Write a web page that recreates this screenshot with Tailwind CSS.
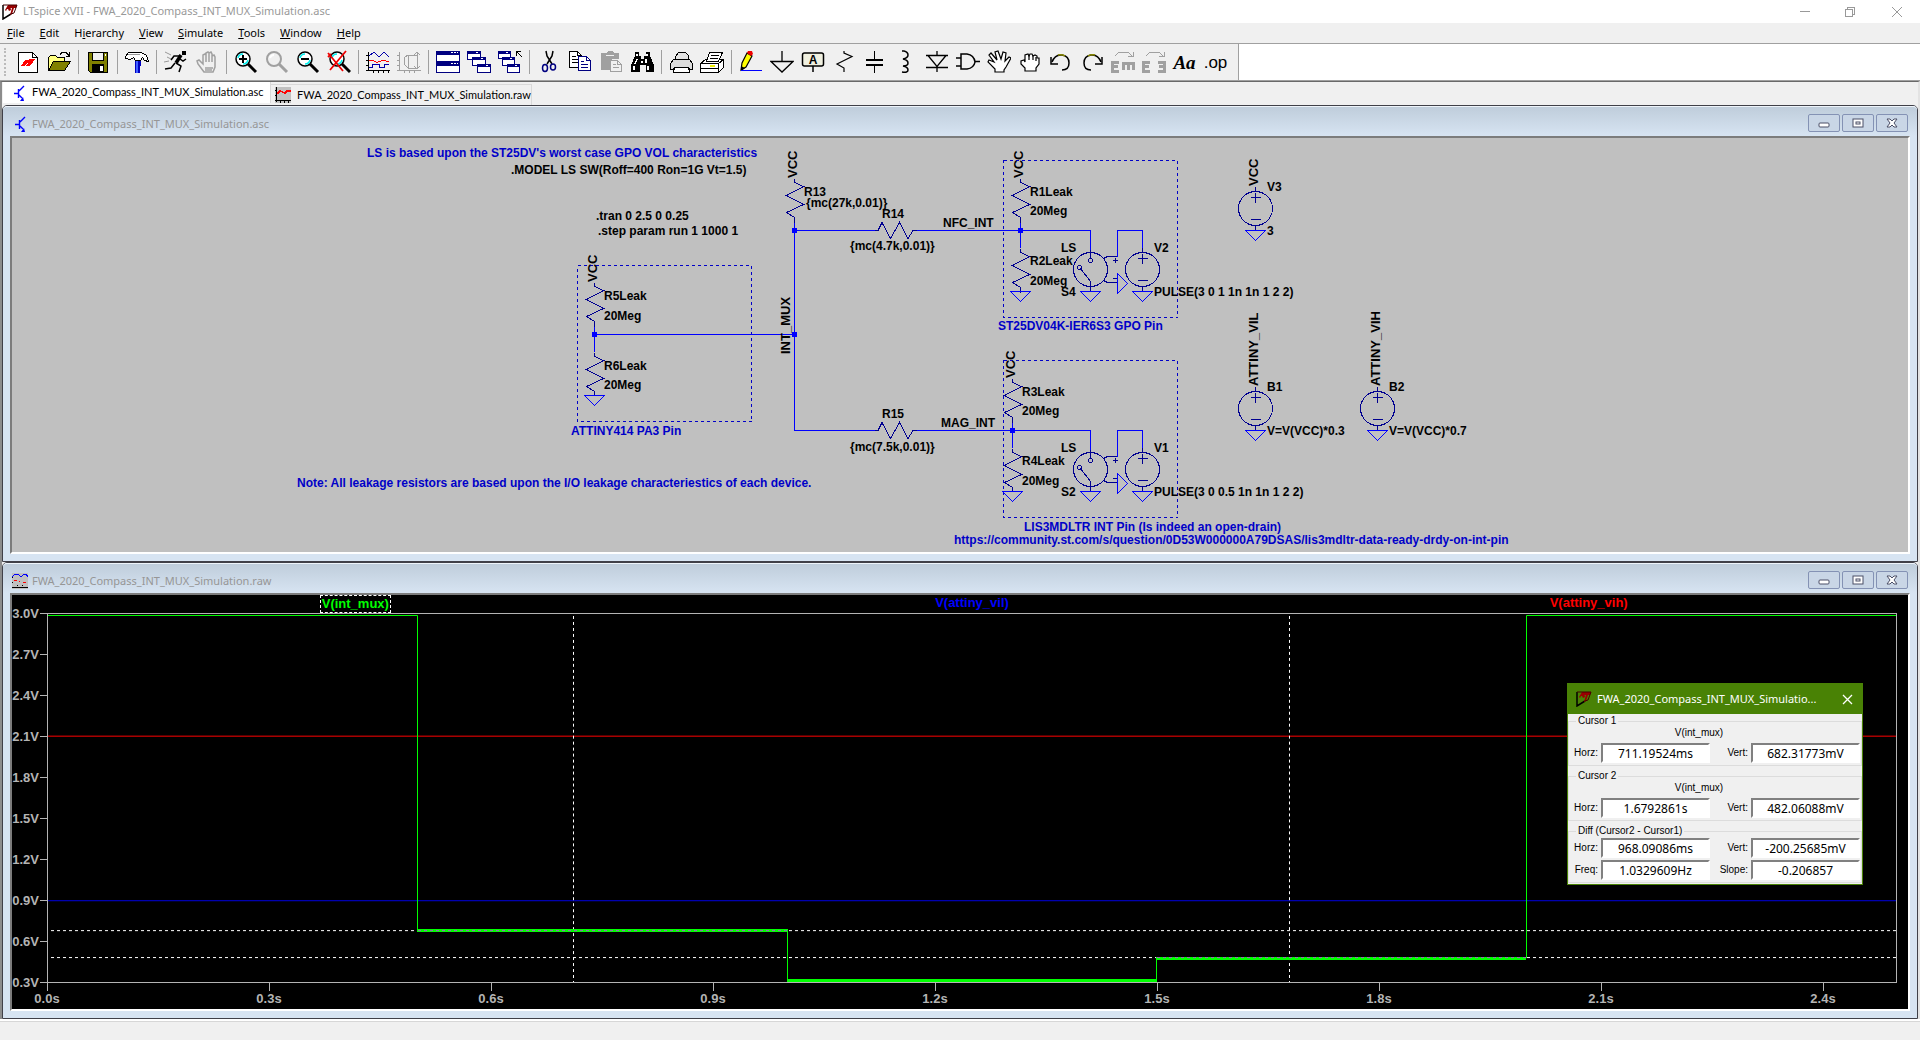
<!DOCTYPE html>
<html lang="en">
<head>
<meta charset="utf-8">
<title>LTspice XVII - FWA_2020_Compass_INT_MUX_Simulation.asc</title>
<script src="https://cdn.jsdelivr.net/npm/@tailwindcss/browser@4"></script>
</head>
<body class="h-screen overflow-hidden bg-[#f0f0f0] flex flex-col font-['Noto_Sans',sans-serif] text-[11px] text-black">

<!-- shared symbols -->
<svg class="hidden" aria-hidden="true">
  <defs>
    <symbol id="logo" viewBox="0 0 16 16">
      <path d="M1 1v14l8-5" fill="none" stroke="currentColor" stroke-width="1.500"/>
      <path d="M3 6l3-5h2l1 5-2 1-1-2H5L4 7zM8 1h7l-1 3h-2l-2 6-2 1 2-7H8z" fill="#900"/>
      <path d="M1 1h14l-3 8-3 1" fill="none" stroke="#400" stroke-width="1"/>
    </symbol>
    <symbol id="transistor" viewBox="0 0 16 16">
      <path d="M2 8.500h4M6.500 4v9M7 6l5-5M7 10l3 3" fill="none" stroke="#00f" stroke-width="1.400"/>
      <path d="M12 16H8l3-4z" fill="#00f"/>
    </symbol>
    <symbol id="gnd" overflow="visible"><path d="M-10 0h20L0 10z" fill="none" stroke="#00f"/></symbol>
    <symbol id="src" overflow="visible">
      <g fill="none" stroke="#000090"><circle r="17"/><path d="M0-22v5M0 17v5M-5-11h10M0-16v10M-5 11h10"/></g>
      <use href="#gnd" y="22"/>
    </symbol>
    <symbol id="sw" overflow="visible">
      <g fill="none" stroke="#000090"><circle r="17"/><circle cy="-9" r="2"/><circle cx="-11" cy="-2" r="2"/><path d="M0-20v9M-10-1L0 12v10M13-11l4-2h10M13 11l4 2h10M22-9h5M24.500-11.500v5M22 9h5"/></g>
      <path d="M0-39v19M27-13v-26h25v17" fill="none" stroke="#00f"/>
      <path d="M27 4l10 10-10 10z" fill="none" stroke="#00f"/>
      <use href="#gnd" y="22"/>
    </symbol>
    <symbol id="restore" viewBox="0 0 12 10"><rect x="1" y="1" width="10" height="8" fill="#fff" stroke="#4b4f66"/><rect x="4" y="4" width="4" height="2" fill="#fff" stroke="#4b4f66"/></symbol>
    <symbol id="mini" viewBox="0 0 12 10"><rect x="1" y="5" width="10" height="4" rx="1" fill="#fff" stroke="#4b4f66"/></symbol>
    <symbol id="cross" viewBox="0 0 12 10"><path d="M1 1h3l2 2 2-2h3L8 5l3 4H8L6 7 4 9H1l3-4z" fill="#fff" stroke="#4b4f66"/></symbol>
  </defs>
</svg>

<!-- application title bar -->
<header class="h-[23px] shrink-0 bg-white flex items-center pl-[2px] text-[#999]">
  <svg class="size-[16px] text-black" aria-hidden="true"><use href="#logo"/></svg>
  <h1 class="ml-[5px] flex-1">LTspice XVII - FWA_2020_Compass_INT_MUX_Simulation.asc</h1>
  <button class="w-[46px] h-full flex items-center justify-center" aria-label="Minimize"><svg class="size-[12px]" viewBox="0 0 12 12" shape-rendering="crispEdges"><path d="M1 5.500h10" stroke="#999"/></svg></button>
  <button class="w-[46px] h-full flex items-center justify-center" aria-label="Restore"><svg class="size-[12px]" viewBox="0 0 12 12" fill="none" shape-rendering="crispEdges"><path d="M.5 3.500h7v7h-7zM2.500 3V1.500h7v7H8" stroke="#999"/></svg></button>
  <button class="w-[46px] h-full flex items-center justify-center" aria-label="Close"><svg class="size-[12px]" viewBox="0 0 12 12"><path d="M1 1l10 10M11 1L1 11" stroke="#999"/></svg></button>
</header>

<nav class="h-[20px] shrink-0 flex items-center pl-[7px] gap-[15px]" aria-label="Menu">
  <button><u>F</u>ile</button><button><u>E</u>dit</button><button>H<u>i</u>erarchy</button><button><u>V</u>iew</button><button><u>S</u>imulate</button><button><u>T</u>ools</button><button><u>W</u>indow</button><button><u>H</u>elp</button>
</nav>

<!-- toolbar -->
<div class="h-[38px] shrink-0 bg-white border-y border-[#a0a0a0] flex">
  <div role="toolbar" class="flex items-center bg-[#f0f0f0] border-r border-[#a0a0a0] pl-[4px] pr-[7px]">
    <span class="w-[8px] h-[28px] border-l-2 border-dotted border-[#bbb]"></span>
    <button class="w-[31px] h-full flex items-center justify-center" aria-label="New schematic"><svg class="size-[24px]" viewBox="0 0 24 24" shape-rendering="crispEdges"><path d="M2.500 2.500h14l5 5v15h-19z" fill="#fff" stroke="#000"/><path d="M16.500 2.500v5h5" fill="none" stroke="#000"/><path d="M5 16l4-6h5l-1 3h-2l-2 3zM13 9h6l-3 5-3 2H9l2-2 2-1z" fill="#f00"/></svg></button>
    <button class="w-[31px] h-full flex items-center justify-center" aria-label="Open"><svg class="size-[24px]" viewBox="0 0 24 24" shape-rendering="crispEdges"><path d="M1.500 20V7.500l2-2h5l2 2h7v4" fill="#ffff80" stroke="#000"/><path d="M1.500 20.500l5-9h17l-6 9z" fill="#808000" stroke="#000"/><path d="M13 4.500l2-2h4l3 3M22.500 2v4h-4" fill="none" stroke="#000"/></svg></button>
    <span class="w-[8px] h-[24px] flex justify-center"><i class="w-px bg-[#a0a0a0]"></i></span>
    <button class="w-[31px] h-full flex items-center justify-center" aria-label="Save"><svg class="size-[24px]" viewBox="0 0 24 24" shape-rendering="crispEdges"><path d="M2.500 2.500h19v20h-17l-2-2z" fill="#808000" stroke="#000"/><path d="M6.500 2.500h11v8h-11z" fill="#f0f0f0" stroke="#000"/><path d="M6 14h12v8H6z" fill="#000"/><path d="M14 16h3v5h-3z" fill="#fff"/><path d="M19 4h1v2h-1z" fill="#fff"/></svg></button>
    <span class="w-[8px] h-[24px] flex justify-center"><i class="w-px bg-[#a0a0a0]"></i></span>
    <button class="w-[31px] h-full flex items-center justify-center" aria-label="Control panel"><svg class="size-[24px]" viewBox="0 0 24 24" shape-rendering="crispEdges"><path d="M.5 6.500l3-4h13l5 3 2 6-4-1-2-3-2 3h-5l-2-3-3 2-5-1z" fill="#fff" stroke="#000"/><path d="M3 4h12" stroke="#999"/><path d="M10 11h6v5h-1v7h-5v-7z" fill="#0000c0"/><path d="M11 11h2v12h-2z" fill="#4060ff"/></svg></button>
    <span class="w-[8px] h-[24px] flex justify-center"><i class="w-px bg-[#a0a0a0]"></i></span>
    <button class="w-[31px] h-full flex items-center justify-center" aria-label="Run"><svg class="size-[24px]" viewBox="0 0 24 24" fill="none" stroke="#000"><path d="M18 1h4v4h-4z" fill="#000" stroke="none"/><path d="M17 5l-5 8" stroke-width="3.500"/><path d="M16 6l-6 0-3 4M16 9l3 2 3-2M12 13l5 3-2 6M11 13l-4 5-6 1" stroke-width="1.500"/><path d="M1 2l6 3M3 7l4 2M0 12l5-1" stroke="#999"/></svg></button>
    <button class="w-[31px] h-full flex items-center justify-center" aria-label="Halt"><svg class="size-[24px]" viewBox="0 0 24 24" fill="none" stroke="#a0a0a0" stroke-width="1.500"><path d="M9 22l-6-8-1-3 2-1 4 4V5l2-1 1 1v7V3l2-1 1 1v9V3l2-1 1 2v8V6l2-1 1 2v10l-2 5z"/><path d="M10 18h8M10 20h7"/></svg></button>
    <span class="w-[8px] h-[24px] flex justify-center"><i class="w-px bg-[#a0a0a0]"></i></span>
    <button class="w-[31px] h-full flex items-center justify-center" aria-label="Zoom in"><svg class="size-[24px]" viewBox="0 0 24 24" fill="none"><circle cx="9" cy="9" r="7" fill="#fff" stroke="#000" stroke-width="1.500"/><path d="M4 8q1-4 5-4M14 10q-1 4-5 4" stroke="#0ee" stroke-width="1.500"/><path d="M9 5v8M5 9h8" stroke="#000" stroke-width="2"/><path d="M14 14l8 8" stroke="#000" stroke-width="3"/></svg></button>
    <button class="w-[31px] h-full flex items-center justify-center" aria-label="Pan"><svg class="size-[24px]" viewBox="0 0 24 24" fill="none" stroke="#a0a0a0"><circle cx="9" cy="9" r="7" stroke-width="2"/><path d="M5 8q1-3 4-3" stroke="#fff" stroke-width="2"/><path d="M14 14l8 8" stroke-width="3"/></svg></button>
    <button class="w-[31px] h-full flex items-center justify-center" aria-label="Zoom out"><svg class="size-[24px]" viewBox="0 0 24 24" fill="none"><circle cx="9" cy="9" r="7" fill="#fff" stroke="#000" stroke-width="1.500"/><path d="M4 8q1-4 5-4M14 10q-1 4-5 4" stroke="#0ee" stroke-width="1.500"/><path d="M5 9h8" stroke="#000" stroke-width="2"/><path d="M14 14l8 8" stroke="#000" stroke-width="3"/></svg></button>
    <button class="w-[31px] h-full flex items-center justify-center" aria-label="Zoom full extents"><svg class="size-[24px]" viewBox="0 0 24 24" fill="none"><circle cx="10" cy="9" r="7" fill="#fff" stroke="#000" stroke-width="1.500"/><path d="M5 8q1-4 5-4M15 10q-1 4-5 4" stroke="#0ee" stroke-width="1.500"/><path d="M15 14l8 8" stroke="#000" stroke-width="3"/><path d="M1 3l15 18M19 1L3 20M1 7l3-3" stroke="#e00" stroke-width="1.800"/></svg></button>
    <span class="w-[8px] h-[24px] flex justify-center"><i class="w-px bg-[#a0a0a0]"></i></span>
    <button class="w-[31px] h-full flex items-center justify-center" aria-label="Autorange"><svg class="size-[24px]" viewBox="0 0 24 24" fill="none" shape-rendering="crispEdges"><path d="M2.500 2v19M0 20.500h24M0 5.500h3M0 10.500h3M0 15.500h3M7.500 20v3M12.500 20v3M17.500 20v3M22.500 20v3" stroke="#000"/><path d="M3 6l5-4 5 5 5-5 5 5" stroke="#00a"/><path d="M3 10.500h4l4 2 5-2 7 1" stroke="#f00"/><path d="M3 17.500h3v-3h7v3h5v-3h5" stroke="#00a"/></svg></button>
    <button class="w-[31px] h-full flex items-center justify-center" aria-label="Plot settings"><svg class="size-[24px]" viewBox="0 0 24 24" fill="none" stroke="#a0a0a0" shape-rendering="crispEdges"><path d="M2.500 2v19M0 20.500h24M0 5.500h3M0 10.500h3M0 15.500h3M7.500 20v3M12.500 20v3M17.500 20v3M7 8l4-3h10M7 8v6l4 4h10M20.500 2v17M17 5l3-3 3 3M17 16l3 3 3-3M11 5v13"/></svg></button>
    <span class="w-[8px] h-[24px] flex justify-center"><i class="w-px bg-[#a0a0a0]"></i></span>
    <button class="w-[31px] h-full flex items-center justify-center" aria-label="Tile windows"><svg class="size-[24px]" viewBox="0 0 24 24" fill="#fff" stroke="#000080" shape-rendering="crispEdges"><path d="M.5 1.500h23v10H.5zM.5 12.500h23v10H.5z"/><path d="M1 3h22M1 14h22" stroke-width="3"/><path d="M15 2.500h2M18 2.500h2M21 2.500h1M15 13.500h2M18 13.500h2M21 13.500h1" stroke="#fff"/></svg></button>
    <button class="w-[31px] h-full flex items-center justify-center" aria-label="Cascade windows"><svg class="size-[24px]" viewBox="0 0 24 24" fill="#fff" stroke="#000080" shape-rendering="crispEdges"><path d="M.5 1.500h13v8H.5z"/><path d="M1 2.500h12" stroke-width="3"/><path d="M5.500 7.500h13v8h-13z"/><path d="M6 8.500h12" stroke-width="3"/><path d="M10.500 14.500h13v8h-13z"/><path d="M11 15.500h12" stroke-width="3"/><path d="M9 2.500h2M14 8.500h2M19 15.500h2" stroke="#fff"/></svg></button>
    <button class="w-[31px] h-full flex items-center justify-center" aria-label="Close all"><svg class="size-[24px]" viewBox="0 0 24 24" fill="#fff" stroke="#000080" shape-rendering="crispEdges"><path d="M.5 1.500h12v7H.5z"/><path d="M1 2.500h11" stroke-width="3"/><path d="M4.500 7.500h12v8h-12z"/><path d="M5 8.500h11" stroke-width="3"/><path d="M9.500 14.500h12v8h-12z"/><path d="M10 15.500h11" stroke-width="3"/><path d="M8 2.500h2M12 8.500h2M17 15.500h2" stroke="#fff"/><path d="M18.500 6V1.500H23M19 2l5 5" fill="none" stroke="#000"/></svg></button>
    <span class="w-[8px] h-[24px] flex justify-center"><i class="w-px bg-[#a0a0a0]"></i></span>
    <button class="w-[31px] h-full flex items-center justify-center" aria-label="Cut"><svg class="size-[24px]" viewBox="0 0 24 24" fill="none"><path d="M9 1l1 5 5 8M16 1l-1 5-5 8" stroke="#000" stroke-width="1.500"/><ellipse cx="8" cy="18" rx="2.500" ry="3.500" stroke="#000080" stroke-width="1.500"/><ellipse cx="16" cy="17" rx="2.500" ry="3" stroke="#000080" stroke-width="1.500"/></svg></button>
    <button class="w-[31px] h-full flex items-center justify-center" aria-label="Copy"><svg class="size-[24px]" viewBox="0 0 24 24" fill="#fff" shape-rendering="crispEdges"><path d="M1.500 1.500h8l4 4v12h-12z" stroke="#000"/><path d="M9.500 1.500v4h4M4 6.500h4M4 9.500h6M4 12.500h6" fill="none" stroke="#000"/><path d="M10.500 6.500h8l4 4v10h-12z" stroke="#000080"/><path d="M18.500 6.500v4h4M13 11.500h3M13 14.500h7M13 17.500h7" fill="none" stroke="#000080"/></svg></button>
    <button class="w-[31px] h-full flex items-center justify-center" aria-label="Paste"><svg class="size-[24px]" viewBox="0 0 24 24" fill="#a0a0a0" shape-rendering="crispEdges"><path d="M2 3h5l2-2h4l2 2h5v6h-7v11H2z"/><path d="M7 5h8" stroke="#f0f0f0"/><path d="M11.500 10.500h7l4 4v7h-11z" fill="#f0f0f0" stroke="#a0a0a0"/><path d="M18.500 10.500v4h4M14 14.500h3M14 17.500h6" fill="none" stroke="#a0a0a0"/></svg></button>
    <button class="w-[31px] h-full flex items-center justify-center" aria-label="Find"><svg class="size-[24px]" viewBox="0 0 24 24" shape-rendering="crispEdges"><path d="M5 2h4v4h2v3h3V6h2V2h4v4l4 9v7h-8v-7h-6v7H1v-7l4-9z"/><path d="M7 4v2M7 9l-2 5M17 4v2M16 9v4M4 16v4M18 16v4M12 11v2" stroke="#fff" stroke-width="1.500"/></svg></button>
    <span class="w-[8px] h-[24px] flex justify-center"><i class="w-px bg-[#a0a0a0]"></i></span>
    <button class="w-[31px] h-full flex items-center justify-center" aria-label="Print"><svg class="size-[24px]" viewBox="0 0 24 24" fill="#fff" stroke="#000" shape-rendering="crispEdges"><path d="M6.500 10.500v-4l3-4h7l3 3v5" fill="#e4e4e4"/><path d="M1.500 13.500l3-4h16l3 4v6h-3l-1-2h-14l-1 2h-3z" fill="#dcdcdc"/><path d="M5.500 17.500h14l1 5h-16z"/></svg></button>
    <button class="w-[31px] h-full flex items-center justify-center" aria-label="Print setup"><svg class="size-[24px]" viewBox="0 0 24 24" fill="#fff" stroke="#000" shape-rendering="crispEdges"><path d="M.5 13.500l5-4h18v8l-5 5H.5z"/><path d="M6.500 11.500l3-9h13l-4 9z"/><path d="M11 5.500h8M10 8.500h8"/><path d="M1 13.500h17.500v9M18.500 13.500l5-4M1 18.500h17" fill="none"/><path d="M10 16h5" stroke="#ee0" stroke-width="2"/></svg></button>
    <span class="w-[8px] h-[24px] flex justify-center"><i class="w-px bg-[#a0a0a0]"></i></span>
    <button class="w-[31px] h-full flex items-center justify-center" aria-label="Draw wire"><svg class="size-[24px]" viewBox="0 0 24 24"><path d="M8 3l5 3-6 11-5 3 1-7z" fill="#ff0" stroke="#000" stroke-width="1.200"/><path d="M9 1h4l1 3-2 2-4-3z" fill="#e00"/><path d="M2 16v5l4-3z"/><path d="M2 20.500h21" stroke="#00f"/></svg></button>
    <button class="w-[31px] h-full flex items-center justify-center" aria-label="Ground"><svg class="size-[24px]" viewBox="0 0 24 24" fill="none" stroke="#000" stroke-width="1.300"><path d="M12 1v10.500M1 11.500h22L12 22z"/></svg></button>
    <button class="w-[31px] h-full flex items-center justify-center" aria-label="Label net"><svg class="size-[24px]" viewBox="0 0 24 24"><rect x="1.500" y="3" width="21" height="13" rx="2" fill="#f0f0e0" stroke="#000" stroke-width="1.500"/><text x="12" y="14" text-anchor="middle" class="font-['Liberation_Sans',sans-serif] font-bold text-[12px]">A</text><path d="M12 16v6" stroke="#000" stroke-width="1.500"/></svg></button>
    <button class="w-[31px] h-full flex items-center justify-center" aria-label="Resistor"><svg class="size-[24px]" viewBox="0 0 24 24" fill="none" stroke="#000" stroke-width="1.200"><path d="M12 1v2l8 3.500L5 14l7 4v4"/></svg></button>
    <button class="w-[31px] h-full flex items-center justify-center" aria-label="Capacitor"><svg class="size-[24px]" viewBox="0 0 24 24" stroke="#000" shape-rendering="crispEdges"><path d="M11.500 1v9M11.500 15v8"/><path d="M3 10h17M3 15h17" stroke-width="2"/></svg></button>
    <button class="w-[31px] h-full flex items-center justify-center" aria-label="Inductor"><svg class="size-[24px]" viewBox="0 0 24 24" fill="none" stroke="#000" stroke-width="1.500"><path d="M8 1h2q4 1 4 4t-5 4q5 1 5 4t-5 3q5 1 5 4t-6 2"/></svg></button>
    <button class="w-[31px] h-full flex items-center justify-center" aria-label="Diode"><svg class="size-[24px]" viewBox="0 0 24 24" fill="none" stroke="#000" stroke-width="1.300"><path d="M1 5.500h22M1 17.500h22M3 5.500l9 11 9-11M12 1v4M12 17v5"/></svg></button>
    <button class="w-[31px] h-full flex items-center justify-center" aria-label="Component"><svg class="size-[24px]" viewBox="0 0 24 24" fill="#f0f0f0" stroke="#000" stroke-width="1.500"><path d="M5 4h6q7 1 8 8-1 6-8 7H5z"/><path d="M0 8h5M0 16h5M19 11.500h5" stroke-width="1.300"/></svg></button>
    <button class="w-[31px] h-full flex items-center justify-center" aria-label="Move"><svg class="size-[24px]" viewBox="0 0 24 24" fill="#fff" stroke="#000" stroke-width="1.200"><path d="M8 22v-3l-7-7 1-2 5 2-5-7 2-2 6 7-2-8 3-1 3 8 2-7 3 1-1 8 4-4 2 1-5 9-2 3v2z"/></svg></button>
    <button class="w-[31px] h-full flex items-center justify-center" aria-label="Drag"><svg class="size-[24px]" viewBox="0 0 24 24" fill="#fff" stroke="#000" stroke-width="1.200"><path d="M7 21v-3l-4-4V11l3-1 1 2V5l3-1 1 2 1-2h2l1 2 2-1 2 1v2h2v6l-3 4v3z"/><path d="M11 5v5M15 5v5M18 7v4" fill="none"/></svg></button>
    <button class="w-[31px] h-full flex items-center justify-center" aria-label="Undo"><svg class="size-[24px]" viewBox="0 0 24 24" fill="none" stroke="#000" stroke-width="1.500"><path d="M3 12q3-8 10-7 7 1 7 8t-7 7"/><path d="M2 7v7h7"/><path d="M9 5q4-1 7 1" stroke="#880"/></svg></button>
    <button class="w-[31px] h-full flex items-center justify-center" aria-label="Redo"><svg class="size-[24px]" viewBox="0 0 24 24" fill="none" stroke="#000" stroke-width="1.500"><path d="M21 12q-3-8-10-7-7 1-7 8t7 7"/><path d="M22 7v7h-7"/><path d="M15 5q-4-1-7 1" stroke="#880"/></svg></button>
    <button class="w-[31px] h-full flex items-center justify-center" aria-label="Rotate"><svg class="size-[24px]" viewBox="0 0 24 24" fill="none" stroke="#a0a0a0" shape-rendering="crispEdges"><path d="M8 21H1.500v-9H8M2 16.500h5M11 13h13M12.500 13v7M17.500 13v7M22.500 13v7" stroke-width="3"/><path d="M4 6l4-4h9l4 4M22 2v4h-5"/></svg></button>
    <button class="w-[31px] h-full flex items-center justify-center" aria-label="Mirror"><svg class="size-[24px]" viewBox="0 0 24 24" fill="none" stroke="#a0a0a0" shape-rendering="crispEdges"><path d="M8 21H1.500v-9H8M2 16.500h5M16 12h6.500v9H16M17 16.500h5" stroke-width="3"/><path d="M4 6l4-4h9l4 4M22 2v4h-5"/></svg></button>
    <button class="w-[31px] h-full font-['Liberation_Serif',serif] font-bold italic text-[19px] leading-none">Aa</button>
    <button class="w-[31px] h-full font-['Liberation_Sans',sans-serif] text-[17px] leading-none">.op</button>
  </div>
</div>

<div class="flex-1 min-h-0 flex flex-col border-l-2 border-r-2 border-t border-l-[#8c8c8c] border-r-[#e3e3e3] border-t-[#696969]">
  <!-- document tabs -->
  <div class="h-[23px] shrink-0 flex items-start pl-px font-['Lato',sans-serif]" role="tablist">
    <button role="tab" aria-selected="true" class="h-[21px] w-[268px] bg-white border-r border-[#d9d9d9] flex items-center gap-[4px] pl-[9px]"><svg class="size-[16px] shrink-0" aria-hidden="true"><use href="#transistor"/></svg>FWA_2020_Compass_INT_MUX_Simulation.asc</button>
    <button role="tab" aria-selected="false" class="h-[21px] mt-[2px] w-[261px] border-r border-t border-[#d9d9d9] flex items-center gap-[6px] pl-[4px]"><svg class="size-[16px] shrink-0" viewBox="0 0 16 16" shape-rendering="crispEdges"><path d="M0 0h16v16H0z" fill="#c0c0c0"/><path d="M1.500 0v15M0 13.500h16M0 3.500h2M0 8.500h2M5.500 13v3M9.500 13v3M13.500 13v3" stroke="#000"/><path d="M2 7l3-3 5 2 2-2h4" fill="none" stroke="#f00" stroke-width="1.500"/></svg>FWA_2020_Compass_INT_MUX_Simulation.raw</button>
  </div>

  <!-- schematic window -->
  <section class="flex-1 min-h-0 flex flex-col bg-[#d7e4f2] border border-[#404048] rounded-t-[5px] px-[7px] pb-[7px]">
    <div class="h-[30px] shrink-0 -mx-[7px] px-[7px] flex items-center bg-linear-to-b from-[#bfcddb] to-[#d7e4f2] rounded-t-[4px] border-t border-[#eef4fa] text-[#969696]">
      <svg class="size-[16px] ml-[3px] mt-[4px]" aria-hidden="true"><use href="#transistor"/></svg>
      <h2 class="ml-[3px] flex-1 pt-[6px]">FWA_2020_Compass_INT_MUX_Simulation.asc</h2>
      <div class="flex gap-[2px] mr-[2px] mt-[2px]">
        <button aria-label="Minimize" class="w-[32px] h-[18px] border border-[#8492b4] rounded-[2px] flex items-center justify-center bg-[#c9d6e6]"><svg class="w-[12px] h-[10px]"><use href="#mini"/></svg></button>
        <button aria-label="Maximize" class="w-[32px] h-[18px] border border-[#8492b4] rounded-[2px] flex items-center justify-center bg-[#c9d6e6]"><svg class="w-[12px] h-[10px]"><use href="#restore"/></svg></button>
        <button aria-label="Close" class="w-[32px] h-[18px] border border-[#8492b4] rounded-[2px] flex items-center justify-center bg-[#c9d6e6]"><svg class="w-[12px] h-[10px]"><use href="#cross"/></svg></button>
      </div>
    </div>
    <div class="flex-1 min-h-0 bg-[#c0c0c0] border-2 border-t-[#7c7c7c] border-l-[#7c7c7c] border-r-white border-b-white">
      <svg class="block w-full h-full font-['Liberation_Sans',sans-serif] font-bold text-[12px]" role="img" aria-label="Circuit schematic">
        <g transform="translate(-12,-138)">
          <g shape-rendering="crispEdges">
            <g fill="none" stroke="#0000c8" stroke-dasharray="3 3"><path d="M577.500 265.500h174v156h-174zM1003.500 160.500h174v157h-174zM1003.500 360.500h174v157h-174z"/></g>
            <g fill="none" stroke="#00f"><path d="M794.500 222v208.500H875M794.500 230.500H875M916 230.500h174.500M594.500 334.500h200M594.500 326v26M1020.500 222v26M916 430.500h174.500M1012.500 422v26"/></g>
            <g fill="none" stroke="#000090"><path id="rh" d="M875 230.500h3l4-8 8.500 16 9-16 8.500 16 5-8h4"/><use href="#rh" y="200"/></g>
            <g fill="#00f"><path d="M792 228h5v5h-5zM792 332h5v5h-5zM592 332h5v5h-5zM1018 228h5v5h-5zM1010 428h5v5h-5z"/></g>
            <g fill="none" stroke="#000090">
              <path d="M794.500 178.500v4l9 4-17 9 17 9-17 8 8 5v5M594.500 282.500v4l9 4-17 9 17 9-17 8 8 5v5M594.500 352.500v4l9 4-17 9 17 9-17 8 8 5v4M1020.500 178.500v4l9 4-17 9 17 9-17 8 8 5v5M1020.500 248.500v4l9 4-17 9 17 9-17 8 8 5v5M1012.500 378.500v4l9 4-17 9 17 9-17 8 8 5v5M1012.500 448.500v4l9 4-17 9 17 9-17 8 8 5v4"/>
            </g>
            <use href="#gnd" x="594.500" y="395.500"/><use href="#gnd" x="1020.500" y="291.500"/><use href="#gnd" x="1012.500" y="491.500"/>
            <use href="#sw" x="1090.500" y="269.500"/><use href="#sw" x="1090.500" y="469.500"/>
            <use href="#src" x="1142.500" y="269.500"/><use href="#src" x="1142.500" y="469.500"/>
            <use href="#src" x="1255.500" y="208.500"/><use href="#src" x="1255.500" y="408.500"/><use href="#src" x="1377.500" y="408.500"/>
          </g>
          <g fill="#0000c8">
            <text x="367" y="157">LS is based upon the ST25DV's worst case GPO VOL characteristics</text>
            <text x="571" y="435">ATTINY414 PA3 Pin</text>
            <text x="297" y="487">Note: All leakage resistors are based upon the I/O leakage characteriestics of each device.</text>
            <text x="998" y="330">ST25DV04K-IER6S3 GPO Pin</text>
            <text x="1024" y="531">LIS3MDLTR INT Pin (Is indeed an open-drain)</text>
            <text x="954" y="544">https://community.st.com/s/question/0D53W000000A79DSAS/lis3mdltr-data-ready-drdy-on-int-pin</text>
          </g>
          <text x="511" y="174">.MODEL LS SW(Roff=400 Ron=1G Vt=1.5)</text>
          <text x="596" y="220">.tran 0 2.5 0 0.25</text>
          <text x="598" y="235">.step param run 1 1000 1</text>
          <text x="604" y="300">R5Leak</text><text x="604" y="320">20Meg</text>
          <text x="604" y="370">R6Leak</text><text x="604" y="389">20Meg</text>
          <text x="804" y="196">R13</text><text x="806" y="207">{mc(27k,0.01)}</text>
          <text x="882" y="218">R14</text><text x="850" y="250">{mc(4.7k,0.01)}</text><text x="943" y="227">NFC_INT</text>
          <text x="882" y="418">R15</text><text x="850" y="451">{mc(7.5k,0.01)}</text><text x="941" y="427">MAG_INT</text>
          <text x="1030" y="196">R1Leak</text><text x="1030" y="215">20Meg</text><text x="1030" y="265">R2Leak</text><text x="1030" y="285">20Meg</text>
          <text x="1061" y="252">LS</text><text x="1061" y="296">S4</text><text x="1154" y="252">V2</text><text x="1154" y="296">PULSE(3 0 1 1n 1n 1 2 2)</text>
          <text x="1022" y="396">R3Leak</text><text x="1022" y="415">20Meg</text><text x="1022" y="465">R4Leak</text><text x="1022" y="485">20Meg</text>
          <text x="1061" y="452">LS</text><text x="1061" y="496">S2</text><text x="1154" y="452">V1</text><text x="1154" y="496">PULSE(3 0 0.5 1n 1n 1 2 2)</text>
          <text x="1267" y="191">V3</text><text x="1267" y="235">3</text>
          <text x="1267" y="391">B1</text><text x="1267" y="435">V=V(VCC)*0.3</text>
          <text x="1389" y="391">B2</text><text x="1389" y="435">V=V(VCC)*0.7</text>
          <g class="text-[13px]">
            <text transform="translate(797,178) rotate(-90)">VCC</text>
            <text transform="translate(597,282) rotate(-90)">VCC</text>
            <text transform="translate(1023,178) rotate(-90)">VCC</text>
            <text transform="translate(1015,378) rotate(-90)">VCC</text>
            <text transform="translate(1258,186) rotate(-90)">VCC</text>
            <text transform="translate(790,354) rotate(-90)">INT_MUX</text>
            <text transform="translate(1258,386) rotate(-90)">ATTINY_VIL</text>
            <text transform="translate(1380,386) rotate(-90)">ATTINY_VIH</text>
          </g>
        </g>
      </svg>
    </div>
  </section>

  <!-- waveform window -->
  <section class="relative flex-1 min-h-0 flex flex-col bg-[#d7e4f2] border border-[#404048] rounded-t-[5px] px-[7px] pb-[7px]">
    <div class="h-[30px] shrink-0 -mx-[7px] px-[7px] flex items-center bg-linear-to-b from-[#bfcddb] to-[#d7e4f2] rounded-t-[4px] border-t border-[#eef4fa] text-[#969696]">
      <svg class="size-[16px] ml-[2px] mt-[4px]" viewBox="0 0 16 16" shape-rendering="crispEdges" fill="none"><path d="M0 0h16v16H0z" fill="#c0c0c0"/><path d="M0 4l3-3 3 0 3 3 3-3 2 0 2 3" stroke="#00f"/><path d="M2 7.500h3M7 8.500h1M11 9.500h3" stroke="#f00"/><path d="M0 14.500h16M5.500 12v1M10.500 12v1M0 9.500h1M0 4.500h1" stroke="#000"/></svg>
      <h2 class="ml-[4px] flex-1 pt-[6px]">FWA_2020_Compass_INT_MUX_Simulation.raw</h2>
      <div class="flex gap-[2px] mr-[2px] mt-[2px]">
        <button aria-label="Minimize" class="w-[32px] h-[18px] border border-[#8492b4] rounded-[2px] flex items-center justify-center bg-[#c9d6e6]"><svg class="w-[12px] h-[10px]"><use href="#mini"/></svg></button>
        <button aria-label="Maximize" class="w-[32px] h-[18px] border border-[#8492b4] rounded-[2px] flex items-center justify-center bg-[#c9d6e6]"><svg class="w-[12px] h-[10px]"><use href="#restore"/></svg></button>
        <button aria-label="Close" class="w-[32px] h-[18px] border border-[#8492b4] rounded-[2px] flex items-center justify-center bg-[#c9d6e6]"><svg class="w-[12px] h-[10px]"><use href="#cross"/></svg></button>
      </div>
    </div>
    <div class="flex-1 min-h-0 overflow-hidden bg-black border-2 border-t-[#7c7c7c] border-l-[#7c7c7c] border-r-white border-b-white grid grid-cols-[35px_minmax(0,1fr)_11px] grid-rows-[18px_minmax(0,1fr)_26px] font-['Liberation_Sans',sans-serif] font-bold text-[13px] leading-[15px] text-[#b4b4b4]">
      <div class="col-start-2 grid grid-cols-3 justify-items-center items-start">
        <span class="text-[#0f0] border border-dashed border-white px-px leading-[16px]">V(int_mux)</span>
        <span class="text-[#00f]">V(attiny_vil)</span>
        <span class="text-[#f00]">V(attiny_vih)</span>
      </div>
      <div class="col-start-1 row-start-2 flex flex-col justify-between items-end whitespace-nowrap">
        <span class="h-px flex items-center gap-px">3.0V<i class="w-[7px] h-px bg-[#b4b4b4]"></i></span>
        <span class="h-px flex items-center gap-px">2.7V<i class="w-[7px] h-px bg-[#b4b4b4]"></i></span>
        <span class="h-px flex items-center gap-px">2.4V<i class="w-[7px] h-px bg-[#b4b4b4]"></i></span>
        <span class="h-px flex items-center gap-px">2.1V<i class="w-[7px] h-px bg-[#b4b4b4]"></i></span>
        <span class="h-px flex items-center gap-px">1.8V<i class="w-[7px] h-px bg-[#b4b4b4]"></i></span>
        <span class="h-px flex items-center gap-px">1.5V<i class="w-[7px] h-px bg-[#b4b4b4]"></i></span>
        <span class="h-px flex items-center gap-px">1.2V<i class="w-[7px] h-px bg-[#b4b4b4]"></i></span>
        <span class="h-px flex items-center gap-px">0.9V<i class="w-[7px] h-px bg-[#b4b4b4]"></i></span>
        <span class="h-px flex items-center gap-px">0.6V<i class="w-[7px] h-px bg-[#b4b4b4]"></i></span>
        <span class="h-px flex items-center gap-px">0.3V<i class="w-[7px] h-px bg-[#b4b4b4]"></i></span>
      </div>
      <div class="col-start-2 row-start-2 border border-[#b4b4b4]">
        <svg class="block w-full h-full overflow-visible" viewBox="0 0 1848 369" preserveAspectRatio="none" fill="none" shape-rendering="crispEdges" role="img" aria-label="Waveforms">
          <path d="M0 287.500h1848" stroke="#0000e0"/>
          <path d="M0 122.500h1848" stroke="#f00"/>
          <path d="M3 317.500h1845M3 344.500h1845" stroke="#fff" stroke-dasharray="3 3"/>
          <path d="M525.500 2v367M1241.500 2v367" stroke="#fff" stroke-dasharray="3 3"/>
          <path d="M0 1.500h369.500v316M739.500 317v51M1108.500 369v-24M1478.500 345V1.500H1848" stroke="#0f0"/>
          <path d="M369 317.500h371M739 367.500h370M1108 345.500h370" stroke="#0f0" stroke-width="3"/>
          <path d="M370 317.500h369M1109 344.500h369" stroke="#a060c0" stroke-dasharray="3 3"/>
        </svg>
      </div>
      <div class="col-start-2 row-start-3 flex">
        <span class="w-[12%] shrink-0 -ml-[6%] flex flex-col items-center"><i class="w-px h-[8px] bg-[#b4b4b4]"></i>0.0s</span>
        <span class="w-[12%] shrink-0 flex flex-col items-center"><i class="w-px h-[8px] bg-[#b4b4b4]"></i>0.3s</span>
        <span class="w-[12%] shrink-0 flex flex-col items-center"><i class="w-px h-[8px] bg-[#b4b4b4]"></i>0.6s</span>
        <span class="w-[12%] shrink-0 flex flex-col items-center"><i class="w-px h-[8px] bg-[#b4b4b4]"></i>0.9s</span>
        <span class="w-[12%] shrink-0 flex flex-col items-center"><i class="w-px h-[8px] bg-[#b4b4b4]"></i>1.2s</span>
        <span class="w-[12%] shrink-0 flex flex-col items-center"><i class="w-px h-[8px] bg-[#b4b4b4]"></i>1.5s</span>
        <span class="w-[12%] shrink-0 flex flex-col items-center"><i class="w-px h-[8px] bg-[#b4b4b4]"></i>1.8s</span>
        <span class="w-[12%] shrink-0 flex flex-col items-center"><i class="w-px h-[8px] bg-[#b4b4b4]"></i>2.1s</span>
        <span class="w-[12%] shrink-0 flex flex-col items-center"><i class="w-px h-[8px] bg-[#b4b4b4]"></i>2.4s</span>
      </div>
    </div>

    <!-- cursor readout floating over the plot -->
    <div role="dialog" aria-label="Cursors" class="absolute right-[54px] top-[120px] w-[296px] bg-[#f0f0f0] border border-[#498205] font-['Liberation_Sans',sans-serif] text-[10px] leading-[12px]">
      <div class="h-[30px] bg-[#498205] text-white flex items-center pl-[8px] font-['Noto_Sans',sans-serif] text-[11px]">
        <svg class="size-[16px] text-black shrink-0" aria-hidden="true"><use href="#logo"/></svg>
        <span class="ml-[5px] w-[231px] whitespace-nowrap">FWA_2020_Compass_INT_MUX_Simulatio...</span>
        <button class="flex-1 h-full flex items-center justify-start pl-[14px]" aria-label="Close"><svg class="size-[11px]" viewBox="0 0 11 11"><path d="M1 1l9 9M10 1l-9 9" stroke="#fff" stroke-width="1.300"/></svg></button>
      </div>
      <form class="pt-px pb-px flex flex-col gap-[4px]">
        <fieldset class="border border-[#dcdcdc] pb-[2px]">
          <legend class="ml-[7px] px-[2px]">Cursor 1</legend>
          <p class="h-[16px] text-center pr-[32px]">V(int_mux)</p>
          <div class="grid grid-cols-[29px_109px_35px_109px] gap-x-[3px] items-center">
            <label for="h1" class="text-right">Horz:</label><input id="h1" value="711.19524ms" class="h-[20px] w-full min-w-0 bg-white border-2 border-t-[#808080] border-l-[#808080] border-r-white border-b-white text-center font-['Noto_Sans',sans-serif] text-[12px]">
            <label for="v1" class="text-right">Vert:</label><input id="v1" value="682.31773mV" class="h-[20px] w-full min-w-0 bg-white border-2 border-t-[#808080] border-l-[#808080] border-r-white border-b-white text-center font-['Noto_Sans',sans-serif] text-[12px]">
          </div>
        </fieldset>
        <fieldset class="border border-[#dcdcdc] pb-[2px]">
          <legend class="ml-[7px] px-[2px]">Cursor 2</legend>
          <p class="h-[16px] text-center pr-[32px]">V(int_mux)</p>
          <div class="grid grid-cols-[29px_109px_35px_109px] gap-x-[3px] items-center">
            <label for="h2" class="text-right">Horz:</label><input id="h2" value="1.6792861s" class="h-[20px] w-full min-w-0 bg-white border-2 border-t-[#808080] border-l-[#808080] border-r-white border-b-white text-center font-['Noto_Sans',sans-serif] text-[12px]">
            <label for="v2" class="text-right">Vert:</label><input id="v2" value="482.06088mV" class="h-[20px] w-full min-w-0 bg-white border-2 border-t-[#808080] border-l-[#808080] border-r-white border-b-white text-center font-['Noto_Sans',sans-serif] text-[12px]">
          </div>
        </fieldset>
        <fieldset class="border border-[#dcdcdc] pb-[2px]">
          <legend class="ml-[7px] px-[2px]">Diff (Cursor2 - Cursor1)</legend>
          <div class="grid grid-cols-[29px_109px_35px_109px] gap-x-[3px] gap-y-[2px] items-center pt-px">
            <label for="h3" class="text-right">Horz:</label><input id="h3" value="968.09086ms" class="h-[20px] w-full min-w-0 bg-white border-2 border-t-[#808080] border-l-[#808080] border-r-white border-b-white text-center font-['Noto_Sans',sans-serif] text-[12px]">
            <label for="v3" class="text-right">Vert:</label><input id="v3" value="-200.25685mV" class="h-[20px] w-full min-w-0 bg-white border-2 border-t-[#808080] border-l-[#808080] border-r-white border-b-white text-center font-['Noto_Sans',sans-serif] text-[12px]">
            <label for="f3" class="text-right">Freq:</label><input id="f3" value="1.0329609Hz" class="h-[20px] w-full min-w-0 bg-white border-2 border-t-[#808080] border-l-[#808080] border-r-white border-b-white text-center font-['Noto_Sans',sans-serif] text-[12px]">
            <label for="s3" class="text-right">Slope:</label><input id="s3" value="-0.206857" class="h-[20px] w-full min-w-0 bg-white border-2 border-t-[#808080] border-l-[#808080] border-r-white border-b-white text-center font-['Noto_Sans',sans-serif] text-[12px]">
          </div>
        </fieldset>
      </form>
    </div>
  </section>
</div>

<!-- status bar -->
<footer class="h-[21px] shrink-0 border-t-2 border-white"><div class="border-t border-[#d7d7d7]"></div></footer>
</body>
</html>
